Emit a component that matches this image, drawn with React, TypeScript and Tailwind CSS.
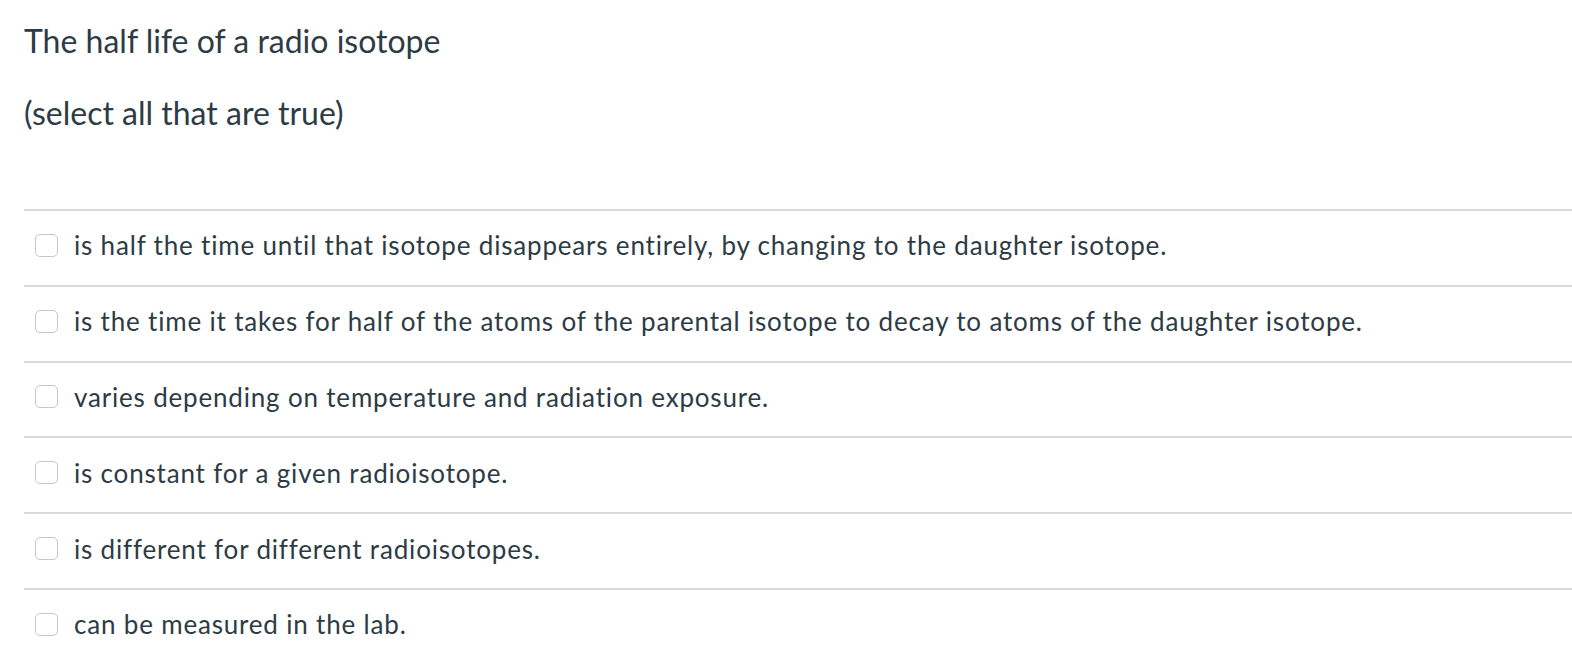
import React from 'react'

const OPTIONS = [
  'is half the time until that isotope disappears entirely, by changing to the daughter isotope.',
  'is the time it takes for half of the atoms of the parental isotope to decay to atoms of the daughter isotope.',
  'varies depending on temperature and radiation exposure.',
  'is constant for a given radioisotope.',
  'is different for different radioisotopes.',
  'can be measured in the lab.',
]

export default function App() {
  return (
    <div className="min-h-screen bg-white text-[#2d3b45] font-['Lato','Noto_Sans',sans-serif] pl-[24px] overflow-hidden">
      {/* Pregunta */}
      <div className="pt-[20px]">
        <p className="text-[32px] leading-[42px]">The half life of a radio isotope</p>
        <p className="text-[32px] leading-[42px] mt-[30px]">(select all that are true)</p>
      </div>

      {/* Respuestas */}
      <div className="mt-[75px]">
        {OPTIONS.map(o => (
          <label key={o} className="flex items-center h-[75.8px] pb-[5px] border-t-2 border-[#dadada] cursor-pointer">
            <span className="ml-[11px] w-[23px] h-[23px] rounded-[5px] border border-[#c4c8cc] bg-white shrink-0" />
            <span className="ml-[16px] text-[26px] leading-[30px] tracking-[0.82px]">{o}</span>
          </label>
        ))}
      </div>
    </div>
  )
}
